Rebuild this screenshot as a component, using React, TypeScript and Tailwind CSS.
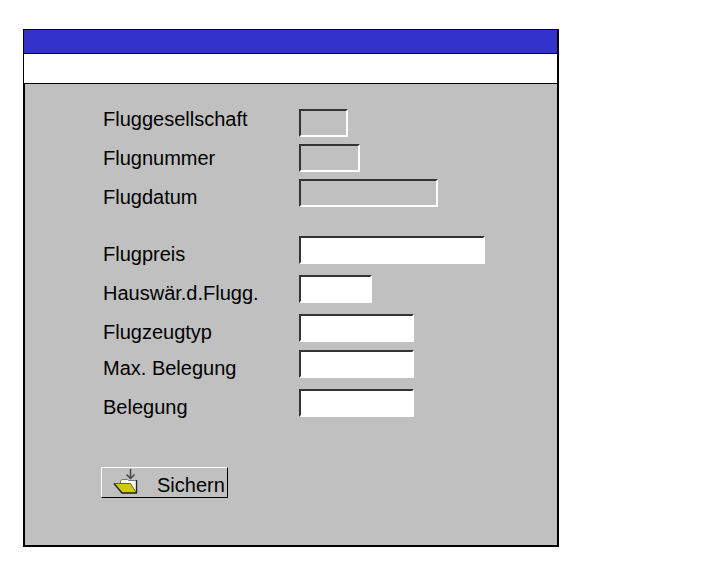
import React from 'react';

type Field = {
  id: string;
  label: string;
  width: string;
  spacing: string;
};

const keyFields: Field[] = [
  { id: 'carrid', label: 'Fluggesellschaft', width: 'w-[49px]', spacing: '' },
  { id: 'connid', label: 'Flugnummer', width: 'w-[61px]', spacing: '' },
  { id: 'fldate', label: 'Flugdatum', width: 'w-[139px]', spacing: '' },
];

const dataFields: Field[] = [
  { id: 'price', label: 'Flugpreis', width: 'w-[186px]', spacing: '' },
  { id: 'currency', label: 'Hauswär.d.Flugg.', width: 'w-[73px]', spacing: 'mt-[11px]' },
  { id: 'planetype', label: 'Flugzeugtyp', width: 'w-[115px]', spacing: 'mt-[11px]' },
  { id: 'seatsmax', label: 'Max. Belegung', width: 'w-[115px]', spacing: 'mt-2' },
  { id: 'seatsocc', label: 'Belegung', width: 'w-[115px]', spacing: 'mt-[11px]' },
];

const FieldLabel: React.FC<{ field: Field }> = ({ field }) => (
  <label htmlFor={field.id} className={`block leading-7 whitespace-nowrap ${field.spacing}`}>
    {field.label}
  </label>
);

const FieldInput: React.FC<{ field: Field; readOnly?: boolean }> = ({ field, readOnly = false }) => (
  <input
    id={field.id}
    type="text"
    readOnly={readOnly}
    className={`
      block h-7 px-1 border-2 border-t-[#333333] border-l-[#333333] border-r-white border-b-white outline-none
      ${readOnly ? 'bg-[#c0c0c0]' : 'bg-white'}
      ${field.width}
      ${field.spacing}
    `}
  />
);

const SaveIcon: React.FC = () => (
  <svg width="26" height="27" viewBox="0 0 26 27" aria-hidden="true">
    <path d="M8 14.5V11.5L9.5 10.5H15L16 12H23V24H16Z" fill="#ffffff" />
    <path d="M7.5 14.5V12L9 10.5H14.5L16 11.5H22.5" fill="none" stroke="#777777" />
    <path d="M23.5 11V24" fill="none" stroke="#222222" strokeWidth="1.4" />
    <path d="M1 14.5H17.5L23.5 24H9Z" fill="#cccc00" />
    <path d="M1 14.5H17.5L23.5 24" fill="none" stroke="#66661a" />
    <path d="M1 14.5L9 24H24" fill="none" stroke="#222211" strokeWidth="1.4" />
    <path d="M17.5 0V9.5M13.5 5.5L17.5 9.5L21.5 5.5" fill="none" stroke="#444444" strokeWidth="1.5" />
  </svg>
);

const App: React.FC = () => {
  return (
    <main className="min-h-screen bg-white pt-[29px] pl-[23px] pr-4 pb-7 font-['Liberation_Sans',Arial,sans-serif] text-xl text-black">
      <div className="w-full max-w-[536px] border border-r-2 border-b-2 border-black">
        <div className="h-6 bg-[#3333cc] border-b border-black" />
        <div className="h-[30px] bg-white border-b border-black" />
        <form
          className="bg-[#c0c0c0] border-l border-black pt-[21px] pb-[47px] pl-[76px]"
          onSubmit={(e) => e.preventDefault()}
        >
          <div className="flex">
            <div className="w-[198px] shrink-0 pl-0.5">
              <div className="flex flex-col gap-[11px]">
                {keyFields.map((field) => (
                  <FieldLabel key={field.id} field={field} />
                ))}
              </div>
              <div className="mt-[29px]">
                {dataFields.map((field) => (
                  <FieldLabel key={field.id} field={field} />
                ))}
              </div>
            </div>
            <div className="pt-1">
              <div className="flex flex-col gap-[7px]">
                {keyFields.map((field) => (
                  <FieldInput key={field.id} field={field} readOnly />
                ))}
              </div>
              <div className="mt-[29px]">
                {dataFields.map((field) => (
                  <FieldInput key={field.id} field={field} />
                ))}
              </div>
            </div>
          </div>
          <button
            type="submit"
            className="mt-[46px] flex items-center gap-[18px] h-[31px] pl-[11px] pr-[2px] border border-t-white border-l-white border-r-black border-b-black"
          >
            <SaveIcon />
            <span className="pt-1">Sichern</span>
          </button>
        </form>
      </div>
    </main>
  );
};

export default App;
